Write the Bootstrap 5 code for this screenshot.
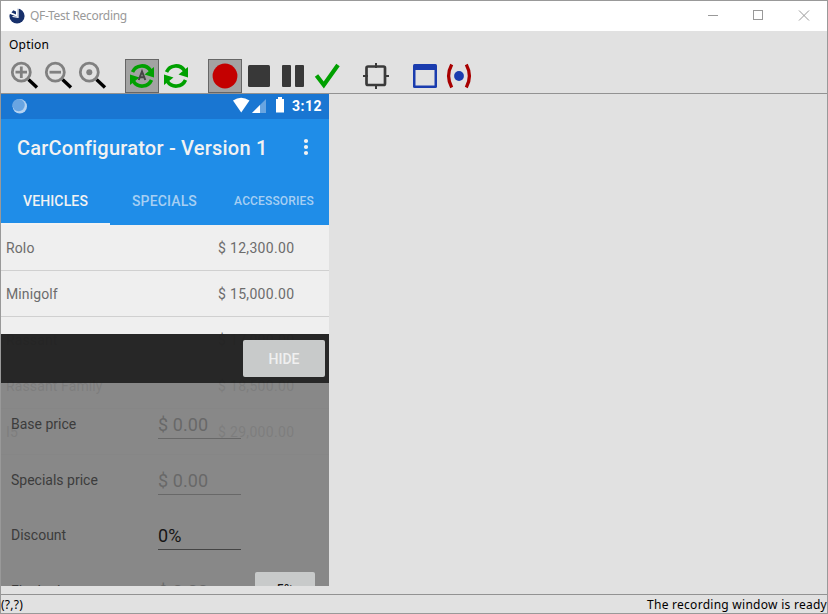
<!DOCTYPE html>
<html lang="en">
<head>
<meta charset="utf-8">
<meta name="viewport" content="width=device-width, initial-scale=1">
<title>QF-Test Recording</title>
<link href="https://cdn.jsdelivr.net/npm/bootstrap@5.3.0/dist/css/bootstrap.min.css" rel="stylesheet">
<style>
body{font-family:"Noto Sans",sans-serif;font-size:12px;line-height:16px;color:#000;background:#e1e1e1}
.window{width:828px;height:614px;border:1px solid #999}
.titlebar{height:30px;background:#fff;color:#999;padding-left:8px}
.title-text{margin-left:4px;font-size:12px;letter-spacing:-.3px}
.menubar{height:27px;margin-bottom:1px;padding-left:8px;letter-spacing:.2px}
.toolbar{height:35px;border-bottom:1px solid #929292;padding-left:7px}
.tool{width:34px;height:34px;padding:0;border:1px solid transparent;border-radius:0;line-height:0;background:none}
.tool.active,.tool.active:hover{background:#a3a3a3;border-color:#666}
.tool-gap{width:15px}
.statusbar{height:19px;border-top:1px solid #929292;padding-top:1px;letter-spacing:.27px}
.phone{width:328px;height:492px;font-family:Roboto,sans-serif;background:#efefef}
.phone-status{height:25px;background:#1976d2;color:#fff}
.appbar{height:57px;background:#1f8de8;color:#f2f2f2;padding:0 18px 0 16px}
.app-title{font-size:20px;line-height:24px;font-weight:500;letter-spacing:.22px}
.tabs{height:49px;background:#1f8de8;font-weight:500;font-size:14px}
.tabs .nav-link{width:109px;padding:2px 0 0;border-radius:0;color:#a6cff3;border-bottom:2px solid transparent;height:49px;letter-spacing:.14px}
.tabs .nav-link.active{color:#f2f2f2;border-color:#f2f2f2}
.tabs .tab-small{font-size:12px;letter-spacing:.15px;padding-left:1px}
.car{height:46px;border-bottom:1px solid #d0d0d0;padding:1px 5px 0;color:#6c6c6c;font-size:14px;letter-spacing:.12px}
.car .price{width:106px;letter-spacing:.32px}
.sheet{top:240px;height:252px}
.sheet-head{height:49px;background:rgba(36,36,36,.985);padding-right:4px}
.sheet-body{height:203px;background:rgba(127,127,127,.92);padding:14px 10px 0}
.key{border:0;border-radius:2px;background:#c8caca;font-weight:500;font-size:14px;padding:0}
.hide{width:82px;height:37px;color:#f0f0f0}
.line{height:55.5px}
.line label{width:147px;color:#3c3c3c;font-size:14px;line-height:16px;padding-top:19px}
.field{width:83px;height:42px;border-bottom:1px solid #686868;color:#686868;font-size:18px;line-height:24px;padding-top:16px;letter-spacing:.1px}
.field.filled{color:#151515;border-color:#444}
.five{width:60px;height:37px;color:#151515;margin:8px 0 0 14px;padding-bottom:2px;font-size:13px}
</style>
</head>
<body class="m-0 overflow-hidden">
<div class="window d-flex flex-column overflow-hidden">
  <header class="titlebar d-flex align-items-center flex-shrink-0">
    <svg width="17" height="17" viewBox="0 0 17 17"><circle cx="8" cy="8" r="7.600" fill="#17306b"/><path d="M0 0H8.500V9L0 5.500Z" fill="#fff"/><path d="M9 0V9.300L3.500 8.500" fill="none" stroke="#fff" stroke-width="1.200"/><path d="M4.300 2.200L7 3.500V6.500L2.500 4.500Z" fill="#17306b"/></svg>
    <span class="title-text">QF-Test Recording</span>
    <svg class="ms-auto" width="126" height="30" viewBox="0 0 126 30" fill="none" stroke="#999" shape-rendering="crispEdges"><path d="M7 14.500H17"/><rect x="52.500" y="9.500" width="9" height="9"/><path d="M98 9.500L108 19.500M108 9.500L98 19.500" shape-rendering="auto"/></svg>
  </header>
  <nav class="menubar d-flex align-items-center flex-shrink-0"><span>Option</span></nav>
  <div class="toolbar d-flex flex-shrink-0">
    <button class="btn tool"><svg width="32" height="32" viewBox="0 0 32 32"><path d="M19.500 19.500L28 27.500" stroke="#000" stroke-width="3.400"/><circle cx="12.300" cy="12.200" r="9" fill="none" stroke="#808080" stroke-width="2.800"/><path d="M6.500 12.200H18M12.300 6.400V18" stroke="#808080" stroke-width="2.800"/></svg></button>
    <button class="btn tool"><svg width="32" height="32" viewBox="0 0 32 32"><path d="M19.500 19.500L28 27.500" stroke="#000" stroke-width="3.400"/><circle cx="12.300" cy="12.200" r="9" fill="none" stroke="#808080" stroke-width="2.800"/><path d="M6.500 12.200H18" stroke="#808080" stroke-width="2.800"/></svg></button>
    <button class="btn tool"><svg width="32" height="32" viewBox="0 0 32 32"><path d="M19.500 19.500L28 27.500" stroke="#000" stroke-width="3.400"/><circle cx="12.300" cy="12.200" r="9" fill="none" stroke="#808080" stroke-width="2.800"/><circle cx="12.300" cy="12.200" r="3" fill="#808080"/></svg></button>
    <span class="tool-gap"></span>
    <button class="btn tool active"><svg width="32" height="32" viewBox="0 0 32 32"><g id="cycle"><path d="M6.500 12A10.300 10.300 0 0 1 24.500 10.500M25.500 20A10.300 10.300 0 0 1 7.500 21.500" fill="none" stroke="#00a000" stroke-width="3.600"/><path d="M28 7V17.500L18.500 14.500ZM4 25V14.500L13.500 17.500Z" fill="#00a000"/></g><path d="M12.700 20L16 11.500L19.300 20M14 17.300H18" fill="none" stroke="#444" stroke-width="2"/></svg></button>
    <button class="btn tool"><svg width="32" height="32" viewBox="0 0 32 32"><use href="#cycle"/></svg></button>
    <span class="tool-gap"></span>
    <button class="btn tool active"><svg width="32" height="32" viewBox="0 0 32 32"><circle cx="16" cy="16" r="12.400" fill="#c40000"/></svg></button>
    <button class="btn tool"><svg width="32" height="32" viewBox="0 0 32 32"><rect x="5" y="5" width="22" height="22" rx="1.500" fill="#383838"/></svg></button>
    <button class="btn tool"><svg width="32" height="32" viewBox="0 0 32 32" fill="#383838"><rect x="5" y="5" width="9" height="22" rx="1"/><rect x="18" y="5" width="9" height="22" rx="1"/></svg></button>
    <button class="btn tool"><svg width="32" height="32" viewBox="0 0 32 32"><path d="M5.500 15.500L12.800 25L27 5" fill="none" stroke="#00a000" stroke-width="4.200"/></svg></button>
    <span class="tool-gap"></span>
    <button class="btn tool"><svg width="32" height="32" viewBox="0 0 32 32" fill="none" stroke="#3a3a3a"><rect x="6.500" y="6.500" width="18.500" height="18.500" rx="1.500" stroke-width="2.700"/><path d="M3 16H8M24 16H29M16 3V8M16 24V29" stroke-width="2"/></svg></button>
    <span class="tool-gap"></span>
    <button class="btn tool"><svg width="32" height="32" viewBox="0 0 32 32"><rect x="4" y="4" width="24" height="24" rx="1.500" fill="#1a3cae"/><rect x="6.500" y="10" width="19" height="15.500" fill="#e1e1e1"/></svg></button>
    <button class="btn tool"><svg width="32" height="32" viewBox="0 0 32 32"><path d="M8.700 4.500Q2.500 16 8.700 27.500M23.300 4.500Q29.500 16 23.300 27.500" fill="none" stroke="#a80000" stroke-width="3.300"/><circle cx="16" cy="16" r="4.900" fill="#1a3cae"/></svg></button>
  </div>
  <main class="flex-grow-1 overflow-hidden">
    <div class="phone position-relative overflow-hidden">
      <div class="phone-status d-flex align-items-center justify-content-between">
        <svg width="30" height="25" viewBox="0 0 30 25"><circle cx="18.800" cy="12.300" r="7.200" fill="#b5d3f2"/><circle cx="17.600" cy="11.100" r="6.200" fill="#69a5e2"/></svg>
        <svg width="98" height="25" viewBox="0 0 98 25" fill="#fff"><path d="M2 6.500Q10 1 18.500 6.500L10.200 18.500Z"/><path d="M35 5V19H21Z" opacity=".35"/><path d="M29 11V19H21Z"/><path d="M45 5H47V3H51V5H53V18.500H45Z"/><text x="61" y="17" font-size="14" font-weight="700" textLength="29.500">3:12</text></svg>
      </div>
      <div class="appbar d-flex align-items-center justify-content-between">
        <span class="app-title">CarConfigurator - Version 1</span>
        <svg width="9" height="20" viewBox="0 0 9 20" fill="#f2f2f2"><circle cx="4" cy="3" r="2.100"/><circle cx="4" cy="9" r="2.100"/><circle cx="4" cy="15" r="2.100"/></svg>
      </div>
      <nav class="nav tabs flex-nowrap">
        <a class="nav-link active d-flex align-items-center justify-content-center">VEHICLES</a>
        <a class="nav-link d-flex align-items-center justify-content-center">SPECIALS</a>
        <a class="nav-link tab-small d-flex align-items-center justify-content-center">ACCESSORIES</a>
      </nav>
      <div class="car d-flex align-items-center justify-content-between"><span>Rolo</span><span class="price">$ 12,300.00</span></div>
      <div class="car d-flex align-items-center justify-content-between"><span>Minigolf</span><span class="price">$ 15,000.00</span></div>
      <div class="car d-flex align-items-center justify-content-between"><span>Rassant</span><span class="price">$ 17,000.00</span></div>
      <div class="car d-flex align-items-center justify-content-between"><span>Rassant Family</span><span class="price">$ 18,500.00</span></div>
      <div class="car d-flex align-items-center justify-content-between"><span>I5</span><span class="price">$ 29,000.00</span></div>
      <section class="sheet position-absolute start-0 w-100">
        <div class="sheet-head d-flex align-items-center justify-content-end"><button class="key hide">HIDE</button></div>
        <div class="sheet-body">
          <div class="line d-flex align-items-start"><label>Base price</label><div class="field">$ 0.00</div></div>
          <div class="line d-flex align-items-start"><label>Specials price</label><div class="field">$ 0.00</div></div>
          <div class="line d-flex align-items-start"><label>Discount</label><div class="field filled">0%</div></div>
          <div class="line d-flex align-items-start"><label>Final price</label><div class="field">$ 0.00</div><button class="key five">5%</button></div>
        </div>
      </section>
    </div>
  </main>
  <footer class="statusbar d-flex align-items-center justify-content-between flex-shrink-0"><span>(?,?)</span><span>The recording window is ready</span></footer>
</div>
<script src="https://cdn.jsdelivr.net/npm/bootstrap@5.3.0/dist/js/bootstrap.bundle.min.js"></script>
</body>
</html>
